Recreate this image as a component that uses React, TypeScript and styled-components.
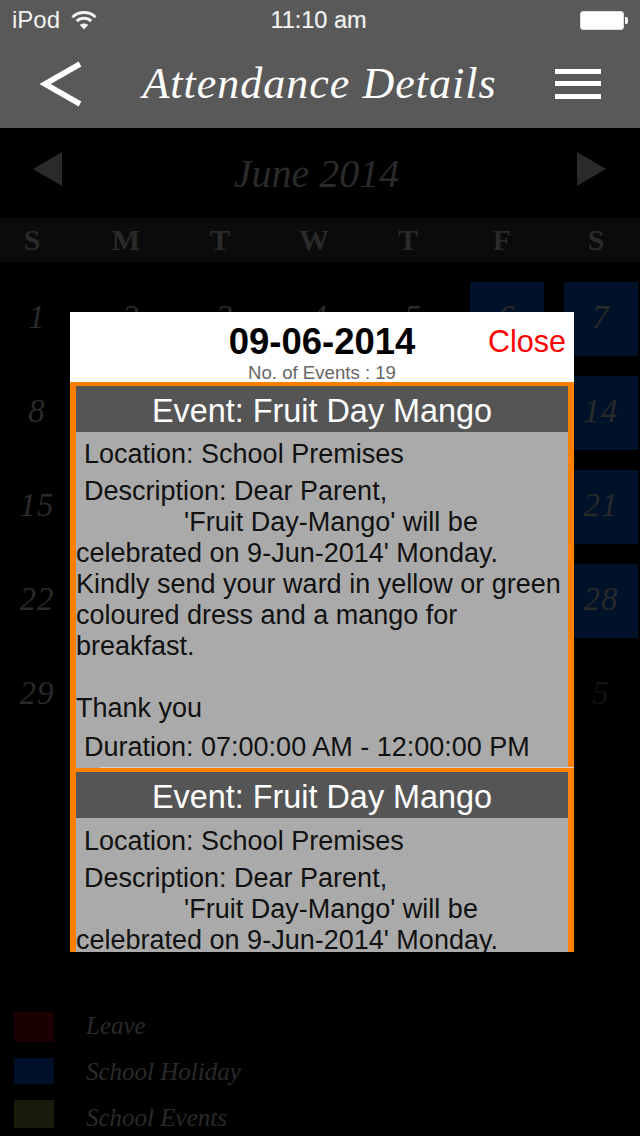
import React from "react";
import styled, { createGlobalStyle } from "styled-components";

const hand = `"Bradley Hand", "Liberation Serif", cursive`;
const sans = `"Liberation Sans", Arial, sans-serif`;

const Global = createGlobalStyle`
  html, body { margin: 0; background: #000; }
`;

const Page = styled.div`
  position: relative;
  width: 640px;
  height: 1136px;
  overflow: hidden;
  background: #000;
  font-family: ${sans};
`;

const Header = styled.header`
  height: 128px;
  background: #595959;
  color: #fff;
`;

const StatusBar = styled.div`
  height: 40px;
  display: grid;
  grid-template-columns: 1fr auto 1fr;
  align-items: center;
  padding: 0 12px;
  font-size: 24px;
  color: #f2f2f2;
`;

const Carrier = styled.div`
  display: flex;
  align-items: center;
  gap: 11px;
`;

const Clock = styled.div`
  font-size: 23.5px;
  margin-left: -3px;
  -webkit-text-stroke: 0.2px #f2f2f2;
`;

const Battery = styled.div`
  justify-self: end;
  display: flex;
  align-items: center;
`;

const BatteryBody = styled.div`
  width: 42px;
  height: 17px;
  background: #fff;
  border: 1px solid #ddd;
  border-radius: 3px;
  box-sizing: content-box;
`;

const BatteryTip = styled.div`
  width: 3px;
  height: 7px;
  margin-left: 1px;
  background: #f2f2f2;
  border-radius: 0 2px 2px 0;
`;

const NavBar = styled.nav`
  height: 88px;
  display: flex;
  align-items: center;
  justify-content: space-between;
  padding: 0 39px 0 38px;
`;

const NavTitle = styled.h1`
  margin: 0 0 1px;
  font-family: ${hand};
  font-style: italic;
  font-weight: 400;
  font-size: 44px;
  letter-spacing: 1px;
  color: #fff;
`;

const NavIcon = styled.svg`
  display: block;
  filter: blur(0.5px);
`;

const MonthRow = styled.div`
  height: 90px;
  display: flex;
  align-items: center;
  justify-content: space-between;
  padding: 0 34px 8px 33px;
  box-sizing: border-box;
`;

const MonthArrow = styled.div<{ $right?: boolean }>`
  width: 0;
  height: 0;
  border-top: 17px solid transparent;
  border-bottom: 17px solid transparent;
  ${(p) => (p.$right ? "border-left: 29px solid #2a2a2a;" : "border-right: 29px solid #2a2a2a;")}
`;

const MonthName = styled.div`
  font-family: ${hand};
  font-style: italic;
  font-size: 40px;
  color: #2a2a2a;
  margin: 8px 0 0 -6px;
`;

const WeekRow = styled.div`
  height: 44px;
  background: #0b0b0b;
  display: grid;
  grid-template-columns: repeat(7, 74px);
  column-gap: 20px;
  align-items: center;
`;

const WeekDay = styled.div`
  margin-left: -10px;
  text-align: center;
  font-family: ${hand};
  font-weight: 700;
  font-size: 30px;
  color: #2a2a2a;
`;

const DayGrid = styled.div`
  display: grid;
  grid-template-columns: repeat(7, 74px);
  grid-auto-rows: 74px;
  gap: 20px;
  margin-top: 20px;
`;

const DayCell = styled.div<{ $holiday?: boolean; $muted?: boolean }>`
  display: flex;
  align-items: center;
  justify-content: center;
  padding-bottom: 4px;
  box-sizing: border-box;
  font-family: ${hand};
  font-style: italic;
  font-size: 33px;
  letter-spacing: 1px;
  color: ${(p) => (p.$muted ? "#121212" : "#2a2a2a")};
  background: ${(p) => (p.$holiday ? "#001229" : "transparent")};
`;

const Legend = styled.div`
  position: absolute;
  left: 14px;
  top: 1003px;
`;

const LegendRow = styled.div`
  height: 46px;
  display: flex;
  gap: 32px;
`;

const Swatch = styled.div<{ $color: string; $height: number; $top: number }>`
  width: 40px;
  height: ${(p) => p.$height}px;
  margin-top: ${(p) => p.$top}px;
  background: ${(p) => p.$color};
`;

const LegendLabel = styled.div`
  font-family: ${hand};
  font-style: italic;
  font-size: 25px;
  line-height: 46px;
  color: #2a2a2a;
`;

const Modal = styled.section`
  position: absolute;
  left: 70px;
  top: 312px;
  width: 504px;
  height: 640px;
  overflow: hidden;
  background: #fff;
`;

const ModalHead = styled.div`
  position: relative;
  height: 70px;
  text-align: center;
`;

const ModalDate = styled.div`
  font-weight: 700;
  font-size: 36.5px;
  line-height: 42px;
  padding-top: 9px;
  color: #000;
`;

const ModalCount = styled.div`
  font-size: 18.6px;
  line-height: 20px;
  color: #666;
`;

const CloseLink = styled.a`
  position: absolute;
  right: 8px;
  top: 11px;
  font-size: 30.5px;
  line-height: 36px;
  color: #f00;
`;

const Card = styled.article`
  position: relative;
  height: 382px;
  border: solid #ff7f00;
  border-width: 4px 6px 0;
  background: #aaa;
  color: #111;
  font-size: 27px;

  &::after {
    content: "";
    position: absolute;
    left: 24px;
    right: -6px;
    bottom: 0;
    height: 1px;
    background: #d4d4d4;
  }
`;

const CardTitle = styled.div`
  height: 46px;
  line-height: 50px;
  background: #555;
  color: #fff;
  text-align: center;
  font-size: 32.4px;
`;

const Field = styled.div<{ $top: number }>`
  padding-left: 8px;
  margin-top: ${(p) => p.$top}px;
  line-height: 38px;
  white-space: nowrap;
`;

const Description = styled.div`
  margin-top: 3px;
`;

const DescLine = styled.div<{ $indent?: number }>`
  height: 31px;
  line-height: 31px;
  padding-left: ${(p) => p.$indent ?? 0}px;
  white-space: nowrap;
`;

const Wifi = () => (
  <svg width="26" height="20" viewBox="0 0 26 20" fill="none" stroke="#f2f2f2" strokeWidth="3">
    <path d="M1.5 7.2C7.8 1 18.2 1 24.5 7.2" />
    <path d="M5.8 11.2C9.8 7.4 16.2 7.4 20.2 11.2" />
    <path d="M13 19.5 8.8 15C11 13 15 13 17.2 15Z" fill="#f2f2f2" stroke="none" />
  </svg>
);

const rows: { day: number; muted?: boolean; holiday?: boolean }[][] = [
  [1, 2, 3, 4, 5, 6, 7],
  [8, 9, 10, 11, 12, 13, 14],
  [15, 16, 17, 18, 19, 20, 21],
  [22, 23, 24, 25, 26, 27, 28],
].map((r) => r.map((day, i) => ({ day, holiday: i > 4 })));
rows.push([
  { day: 29 },
  { day: 30 },
  { day: 1, muted: true },
  { day: 2, muted: true },
  { day: 3, muted: true },
  { day: 4, muted: true },
  { day: 5, muted: true },
]);

const EventCard: React.FC<{ top: number }> = ({ top }) => (
  <Card>
    <CardTitle>Event: Fruit Day Mango</CardTitle>
    <Field $top={top}>Location: School Premises</Field>
    <Description>
      <DescLine $indent={8}>Description: Dear Parent,</DescLine>
      <DescLine $indent={108}>'Fruit Day-Mango' will be</DescLine>
      <DescLine>celebrated on 9-Jun-2014' Monday.</DescLine>
      <DescLine>Kindly send your ward in yellow or green</DescLine>
      <DescLine>coloured dress and a mango for</DescLine>
      <DescLine>breakfast.</DescLine>
      <DescLine />
      <DescLine>Thank you</DescLine>
    </Description>
    <Field $top={4}>Duration: 07:00:00 AM - 12:00:00 PM</Field>
  </Card>
);

export default function App() {
  return (
    <Page>
      <Global />
      <Header>
        <StatusBar>
          <Carrier>
            iPod
            <Wifi />
          </Carrier>
          <Clock>11:10 am</Clock>
          <Battery>
            <BatteryBody />
            <BatteryTip />
          </Battery>
        </StatusBar>
        <NavBar>
          <NavIcon width="46" height="48" viewBox="0 0 46 48" fill="none" stroke="#fff" strokeWidth="5.5">
            <path d="M42 4 7 24l35 20" />
          </NavIcon>
          <NavTitle>Attendance Details</NavTitle>
          <NavIcon width="46" height="32" viewBox="0 0 46 32" fill="#fff">
            <rect x="0" y="1" width="46" height="5" />
            <rect x="0" y="13" width="46" height="5" />
            <rect x="0" y="26" width="46" height="5" />
          </NavIcon>
        </NavBar>
      </Header>

      <MonthRow>
        <MonthArrow />
        <MonthName>June 2014</MonthName>
        <MonthArrow $right />
      </MonthRow>

      <WeekRow>
        {["S", "M", "T", "W", "T", "F", "S"].map((d, i) => (
          <WeekDay key={i}>{d}</WeekDay>
        ))}
      </WeekRow>

      <DayGrid>
        {rows.flat().map((c, i) => (
          <DayCell key={i} $holiday={c.holiday} $muted={c.muted}>
            {c.day}
          </DayCell>
        ))}
      </DayGrid>

      <Legend>
        <LegendRow>
          <Swatch $color="#1a0000" $height={30} $top={9} />
          <LegendLabel>Leave</LegendLabel>
        </LegendRow>
        <LegendRow>
          <Swatch $color="#001029" $height={26} $top={9} />
          <LegendLabel>School Holiday</LegendLabel>
        </LegendRow>
        <LegendRow>
          <Swatch $color="#161b0a" $height={28} $top={5} />
          <LegendLabel>School Events</LegendLabel>
        </LegendRow>
      </Legend>

      <Modal>
        <ModalHead>
          <ModalDate>09-06-2014</ModalDate>
          <ModalCount>No. of Events : 19</ModalCount>
          <CloseLink>Close</CloseLink>
        </ModalHead>
        <EventCard top={3} />
        <EventCard top={4} />
      </Modal>
    </Page>
  );
}
